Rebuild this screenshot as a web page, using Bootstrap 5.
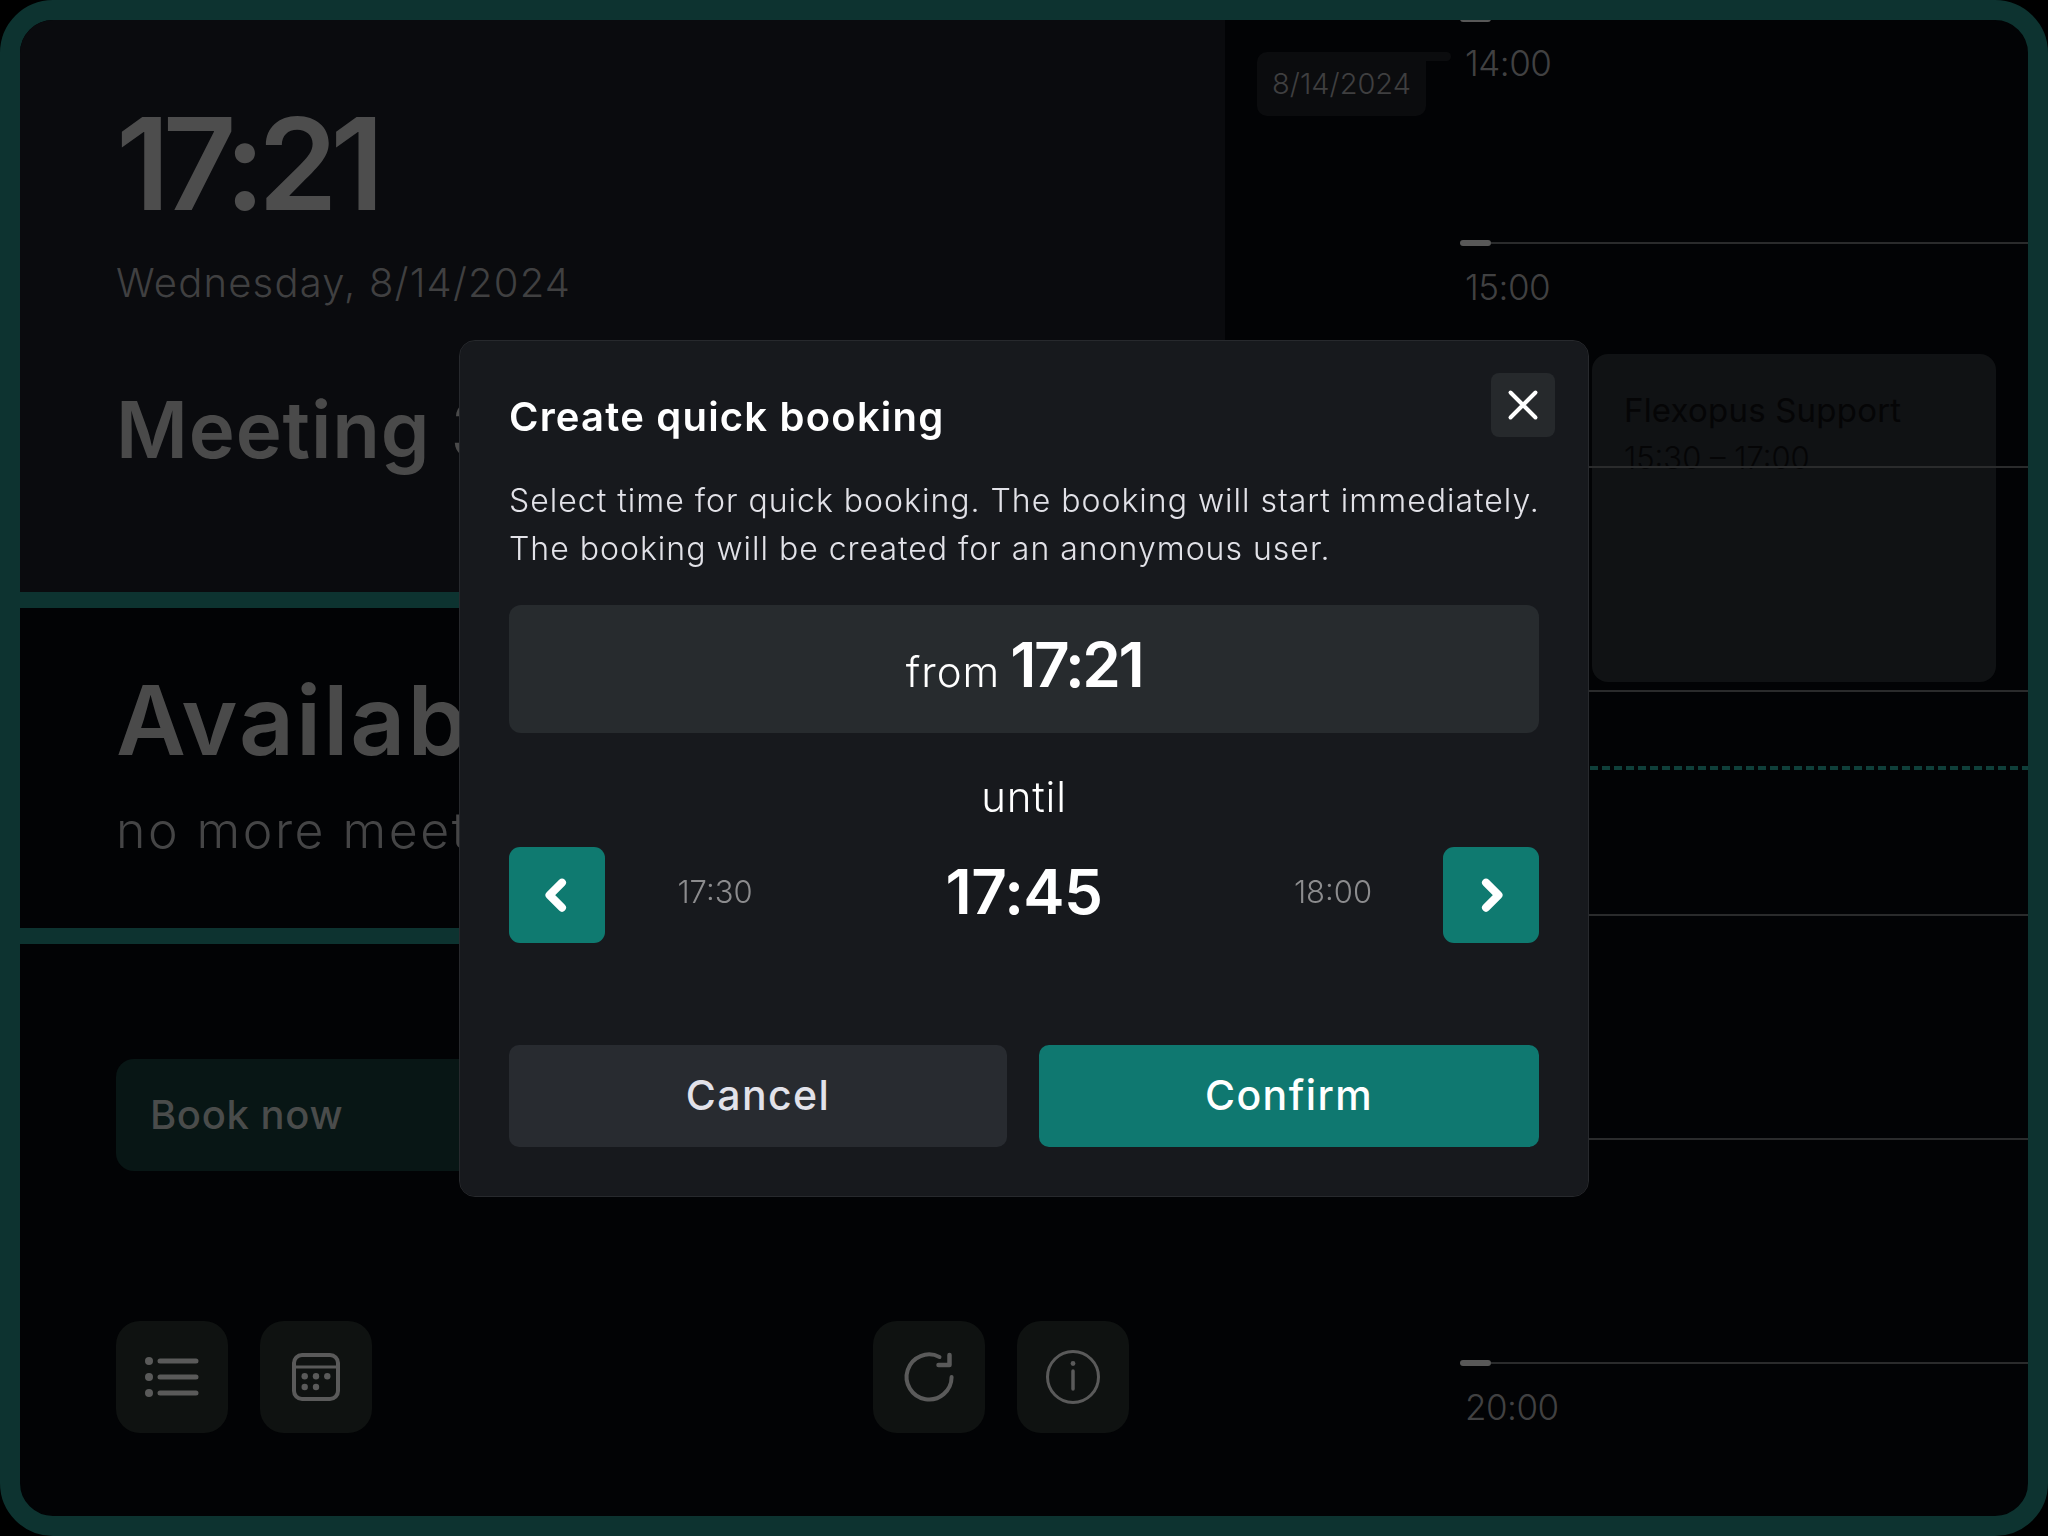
<!DOCTYPE html>
<html lang="en">
<head>
<meta charset="utf-8">
<title>Room display</title>
<link href="https://cdn.jsdelivr.net/npm/bootstrap@5.3.3/dist/css/bootstrap.min.css" rel="stylesheet">
<style>
  html, body { height: 100%; overflow: hidden; background: #000; }
  body, .btn { font-family: "Inter", "Liberation Sans", sans-serif; }

  .screen { height: 1536px; border: 20px solid #0d3330; border-radius: 53px; overflow: hidden; background: #020305; }

  /* left column */
  .side-left { width: 1205px; flex: none; }
  .clock-block { height: 572px; background: #0a0b0e; padding: 77px 96px 0; }
  .clock { font-size: 128px; line-height: 134px; font-weight: 600; color: #4d4d4d; letter-spacing: -7.5px; }
  .clock-date { font-size: 40px; line-height: 48px; font-weight: 300; color: #404041; margin-top: 28px; letter-spacing: 1.2px; }
  .room-name { font-size: 78px; line-height: 96px; font-weight: 600; color: #4a4a4a; margin-top: 75px; white-space: nowrap; letter-spacing: .8px; }
  .status-block { height: 320px; border-top: 16px solid #0d3330; border-bottom: 16px solid #0d3330; box-sizing: content-box; padding: 0 96px; }
  .status-title { font-size: 96px; line-height: 110px; font-weight: 600; color: #4a4a4a; padding-top: 57px; box-sizing: content-box; letter-spacing: 2px; }
  .status-text { font-size: 50px; line-height: 60px; font-weight: 300; color: #454546; margin-top: 25px; white-space: nowrap; letter-spacing: 2.5px; }
  .actions-block { padding: 115px 96px 0; }
  .book-btn { height: 112px; background: #081615; border-radius: 18px; color: #4a4c4b; font-size: 40px; font-weight: 500; padding: 0 34px; display: flex; align-items: center; letter-spacing: .6px; }
  .tile-row { margin-top: 150px; }
  .tile-group { column-gap: 32px; }
  .icon-tile { width: 112px; height: 112px; background: #0f1211; border-radius: 24px; }
  .icon-tile svg { display: block; }

  /* right column: calendar */
  .side-right { position: relative; overflow: hidden; }
  .date-col { width: 235px; flex: none; padding: 32px 0 0 32px; }
  .date-tag { position: relative; width: 169px; height: 64px; background: #0b0c0e; border-radius: 0 0 10px 10px; border-top-left-radius: 10px; color: #3f3f40; font-size: 29px; font-weight: 300; }
  .date-tag::after { content: ""; position: absolute; left: 100%; top: 0; width: 25px; height: 9px; background: #0b0c0e; border-radius: 0 5px 5px 0; }
  .hours { position: relative; margin-top: -4px; }
  .hour-row { height: 224px; position: relative; z-index: 2; }
  .hour-tick { width: 31px; height: 6px; background: #585858; border-radius: 3px; flex: none; }
  .hour-line { height: 2px; background: #2a2b2c; flex: 1; }
  .hour-label { font-size: 35px; line-height: 44px; font-weight: 300; color: #414142; padding: 19px 0 0 5px; letter-spacing: -.5px; }
  .event-box { position: absolute; z-index: 1; left: 132px; top: 338px; width: 404px; height: 328px; background: #101214; border-radius: 16px; padding: 33px 32px; color: #050506; }
  .event-title { font-size: 33px; line-height: 47px; letter-spacing: .2px; }
  .event-time { font-size: 31px; line-height: 47px; font-weight: 300; }
  .now-line { position: absolute; z-index: 2; left: 10px; right: 0; top: 750px; height: 4px; background: repeating-linear-gradient(90deg, #0f3f3a 0 8px, transparent 8px 12px); }

  /* dialog */
  .quick-dialog { --bs-modal-width: 1130px; }
  .quick-dialog .modal-content { --bs-modal-bg: #17191d; --bs-modal-border-color: #27292d; --bs-modal-border-radius: 16px; padding: 46px 49px 49px; }
  .close-btn { position: absolute; top: 32px; right: 33px; width: 64px; height: 64px; padding: 0; background: #26292c; border: 0; border-radius: 8px; }
  .close-btn svg { display: block; }
  .dialog-title { font-size: 40px; line-height: 60px; font-weight: 600; color: #fff; margin: 0; letter-spacing: 1.2px; }
  .dialog-text { font-size: 32px; line-height: 48px; font-weight: 300; color: #e2e2e8; margin: 30px 0 32px; white-space: nowrap; letter-spacing: 1px; }
  .from-box { height: 128px; background: #272b2e; border-radius: 12px; color: #fff; padding-bottom: 8px; }
  .from-inner { column-gap: 10px; }
  .from-word { font-size: 42px; font-weight: 300; line-height: 1; letter-spacing: 1px; }
  .big-time { font-size: 62px; line-height: 1; font-weight: 600; color: #fff; }
  .from-box .big-time { letter-spacing: -2.5px; }
  .until-word { font-size: 42px; line-height: 60px; font-weight: 300; color: #fff; margin-top: 34px; text-align: center; letter-spacing: .8px; }
  .step-row { margin-top: 20px; height: 96px; }
  .step-btn { width: 96px; height: 96px; padding: 0; background: #0f7a70; border: 0; border-radius: 11px; flex: none; }
  .step-btn svg { display: block; }
  .step-row .big-time { letter-spacing: -.6px; text-align: center; margin-bottom: 6px; }
  .side-time { font-size: 31px; font-weight: 300; color: #8c8c8e; line-height: 1; width: 110px; margin: 0 55px 6px; text-align: center; flex: none; }
  .foot-row { margin-top: 102px; gap: 32px; }
  .foot-btn { height: 102px; border: 0; border-radius: 10px; font-size: 41px; font-weight: 500; letter-spacing: 1.4px; }
  .foot-cancel, .foot-cancel:hover { flex: 0 0 498px; background: #282b30; color: #e2e2ea; }
  .foot-confirm, .foot-confirm:hover { flex: 1; background: #0f7870; color: #fff; }
</style>
</head>
<body>
<div class="screen d-flex">

  <div class="side-left d-flex flex-column">
    <div class="clock-block">
      <div class="clock">17:21</div>
      <div class="clock-date">Wednesday, 8/14/2024</div>
      <div class="room-name">Meeting 3</div>
    </div>
    <div class="status-block">
      <div class="status-title">Available</div>
      <div class="status-text">no more meetings</div>
    </div>
    <div class="actions-block">
      <div class="book-btn">Book now</div>
      <div class="tile-row d-flex justify-content-between">
        <div class="tile-group d-flex">
          <div class="icon-tile">
            <svg width="112" height="112" viewBox="0 0 112 112" fill="#5a5a5a">
              <circle cx="33" cy="40" r="4"/><circle cx="33" cy="56" r="4"/><circle cx="33" cy="72" r="4"/>
              <path d="M44 40H80M44 56H80M44 72H80" stroke="#5a5a5a" stroke-width="5" stroke-linecap="round" fill="none"/>
            </svg>
          </div>
          <div class="icon-tile">
            <svg width="112" height="112" viewBox="0 0 112 112" fill="#5a5a5a">
              <rect x="34" y="34" width="44" height="44" rx="8" fill="none" stroke="#5a5a5a" stroke-width="4"/>
              <path d="M34 46H78" stroke="#5a5a5a" stroke-width="3" fill="none"/>
              <circle cx="44.7" cy="55.3" r="3.2"/><circle cx="56" cy="55.3" r="3.2"/><circle cx="67.3" cy="55.3" r="3.2"/>
              <circle cx="44.7" cy="66" r="3.2"/><circle cx="56" cy="66" r="3.2"/>
            </svg>
          </div>
        </div>
        <div class="tile-group d-flex">
          <div class="icon-tile">
            <svg width="112" height="112" viewBox="0 0 112 112" fill="none" stroke="#5a5a5a" stroke-linecap="round" stroke-linejoin="round">
              <path d="M66.5 36A22.5 22.5 0 1 0 78.6 56" stroke-width="4"/>
              <path d="M65.5 44H76.5V34" stroke-width="4.5"/>
            </svg>
          </div>
          <div class="icon-tile">
            <svg width="112" height="112" viewBox="0 0 112 112" fill="none" stroke="#5a5a5a" stroke-linecap="round">
              <circle cx="56" cy="56" r="25.5" stroke-width="3"/>
              <path d="M56 50V68" stroke-width="3.5"/>
              <circle cx="56" cy="42.5" r="2.4" fill="#5a5a5a" stroke="none"/>
            </svg>
          </div>
        </div>
      </div>
    </div>
  </div>

  <div class="side-right flex-grow-1 d-flex">
    <div class="date-col">
      <div class="date-tag d-flex align-items-center justify-content-center">8/14/2024</div>
    </div>
    <div class="hours flex-grow-1">
      <div class="hour-row"><div class="d-flex align-items-center"><span class="hour-tick"></span><span class="hour-line"></span></div><div class="hour-label">14:00</div></div>
      <div class="hour-row"><div class="d-flex align-items-center"><span class="hour-tick"></span><span class="hour-line"></span></div><div class="hour-label">15:00</div></div>
      <div class="hour-row"><div class="d-flex align-items-center"><span class="hour-tick"></span><span class="hour-line"></span></div></div>
      <div class="hour-row"><div class="d-flex align-items-center"><span class="hour-tick"></span><span class="hour-line"></span></div></div>
      <div class="hour-row"><div class="d-flex align-items-center"><span class="hour-tick"></span><span class="hour-line"></span></div></div>
      <div class="hour-row"><div class="d-flex align-items-center"><span class="hour-tick"></span><span class="hour-line"></span></div></div>
      <div class="hour-row"><div class="d-flex align-items-center"><span class="hour-tick"></span><span class="hour-line"></span></div><div class="hour-label">20:00</div></div>
      <div class="event-box">
        <div class="event-title">Flexopus Support</div>
        <div class="event-time">15:30 – 17:00</div>
      </div>
      <div class="now-line"></div>
    </div>
  </div>
</div>

<div class="modal d-block" tabindex="-1">
  <div class="modal-dialog modal-dialog-centered quick-dialog">
    <div class="modal-content">
      <button class="close-btn" type="button" aria-label="Close">
        <svg width="64" height="64" viewBox="0 0 64 64" fill="none" stroke="#fff" stroke-width="4" stroke-linecap="round"><path d="M19.5 19.5L44.5 44.5M44.5 19.5L19.5 44.5"/></svg>
      </button>
      <h5 class="dialog-title">Create quick booking</h5>
      <p class="dialog-text">Select time for quick booking. The booking will start immediately.<br>The booking will be created for an anonymous user.</p>
      <div class="from-box d-flex align-items-center justify-content-center">
        <div class="from-inner d-flex align-items-baseline">
          <span class="from-word">from</span><span class="big-time">17:21</span>
        </div>
      </div>
      <div class="until-word">until</div>
      <div class="step-row d-flex align-items-center">
        <button class="step-btn" type="button" aria-label="Earlier">
          <svg width="96" height="96" viewBox="0 0 96 96" fill="none" stroke="#fff" stroke-width="8" stroke-linecap="round" stroke-linejoin="round"><path d="M53 35.7L40.5 48.2L53 60.7"/></svg>
        </button>
        <span class="side-time">17:30</span>
        <span class="big-time flex-grow-1">17:45</span>
        <span class="side-time">18:00</span>
        <button class="step-btn" type="button" aria-label="Later">
          <svg width="96" height="96" viewBox="0 0 96 96" fill="none" stroke="#fff" stroke-width="8" stroke-linecap="round" stroke-linejoin="round"><path d="M43 35.7L55.5 48.2L43 60.7"/></svg>
        </button>
      </div>
      <div class="foot-row d-flex">
        <button class="btn foot-btn foot-cancel" type="button">Cancel</button>
        <button class="btn foot-btn foot-confirm" type="button">Confirm</button>
      </div>
    </div>
  </div>
</div>
<script src="https://cdn.jsdelivr.net/npm/bootstrap@5.3.3/dist/js/bootstrap.bundle.min.js"></script>
</body>
</html>
